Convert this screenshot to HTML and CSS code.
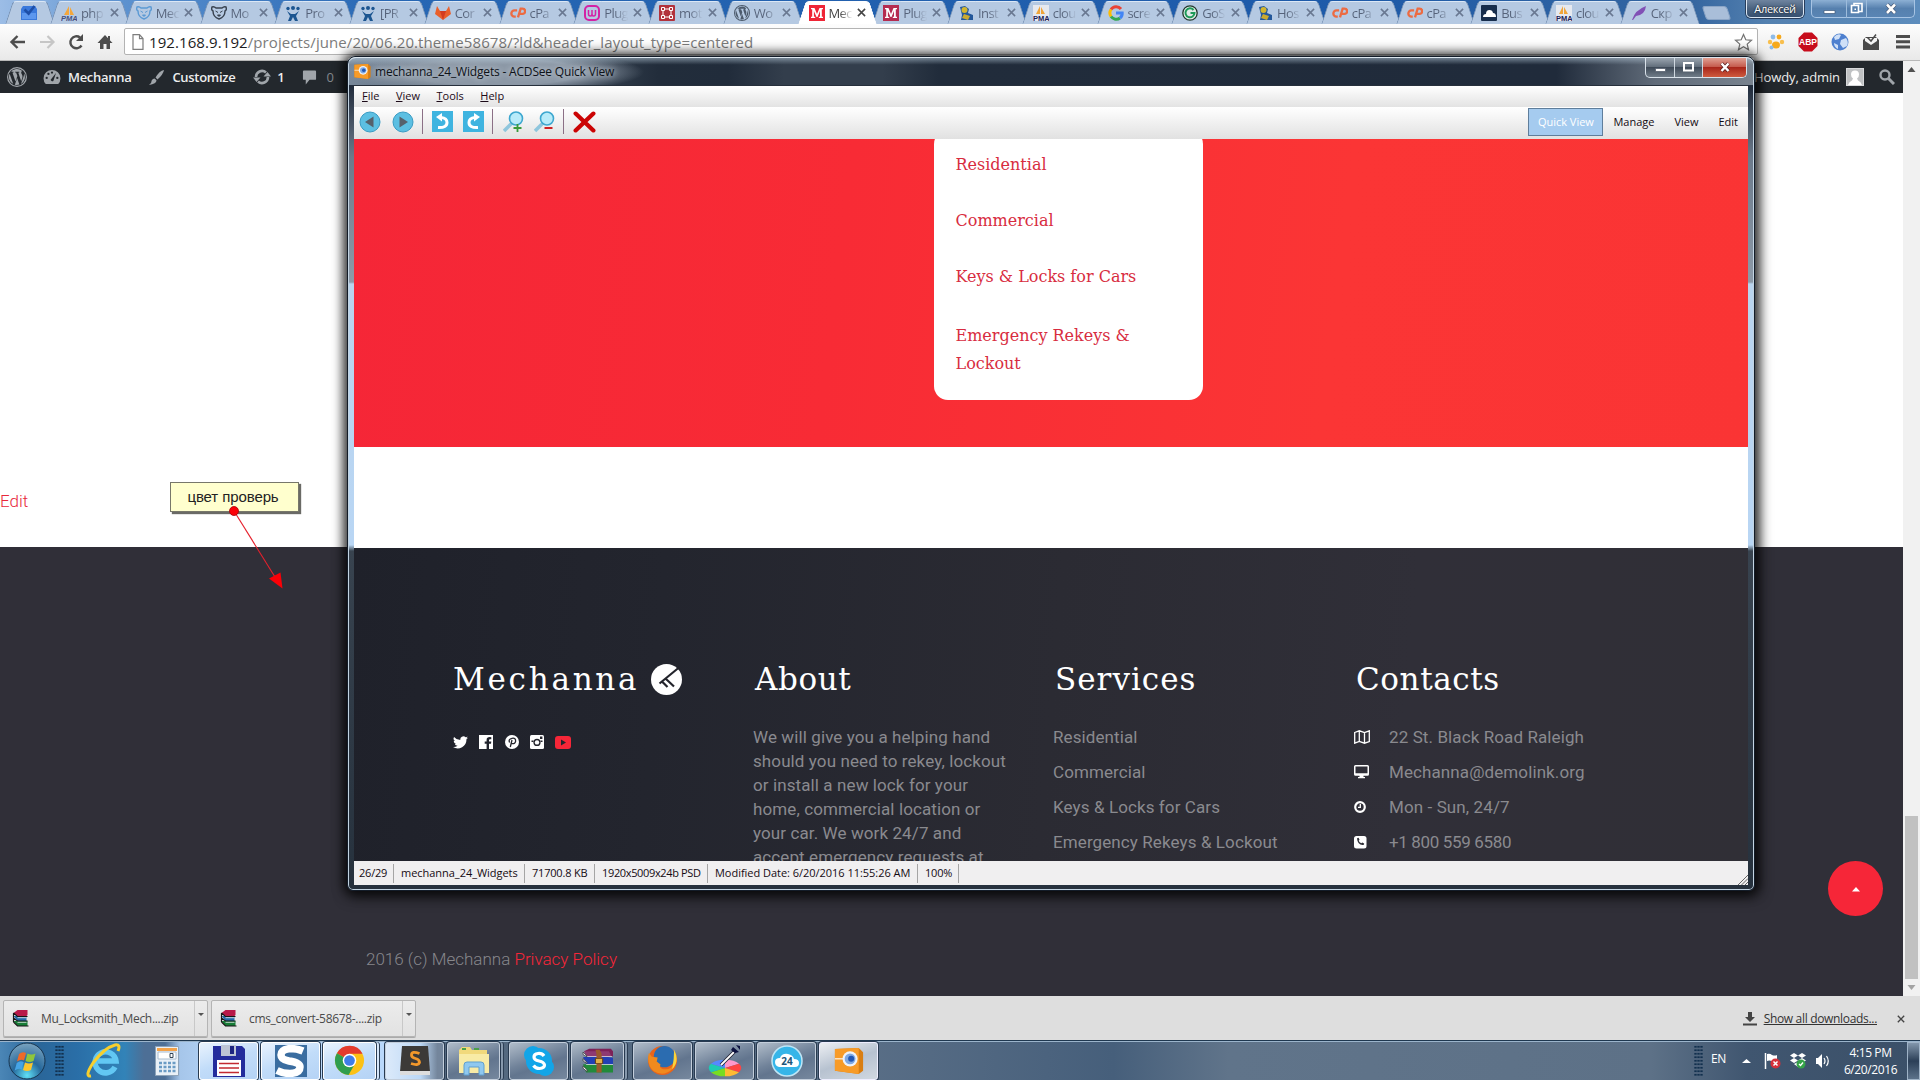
FILE: index.html
```html
<!DOCTYPE html>
<html lang="en">
<head>
<meta charset="utf-8">
<title>Mechanna</title>
<link rel="stylesheet" href="styles.css">
</head>
<body>
<svg class="defs" width="0" height="0" aria-hidden="true">
  <symbol id="i-pma" viewBox="0 0 16 16"><path d="M3 10L8 1v9zM9 10V2l4 8z" fill="#f4a63a"/><text x="0" y="16" font-size="7.500" font-weight="700" font-family="Liberation Sans" font-style="italic" fill="#46507e">PMA</text></symbol>
  <symbol id="i-pma2" viewBox="0 0 16 16"><path d="M0 0h16v16H0z" fill="#e6e9ef"/><path d="M3 9L7 1v8zM8 9V2l4 7z" fill="#f0a53a"/><text x="0" y="15.500" font-size="7.500" font-weight="700" font-family="Liberation Sans" fill="#1d2458">PMA</text></symbol>
  <symbol id="i-bear" viewBox="0 0 16 16"><path d="M1 2q2-1 4 1h6q2-2 4-1 1 3-1 4 0 6-6 8-6-2-6-8-2-1-1-4z" fill="none" stroke="currentColor" stroke-width="1.400"/><path d="M4.500 6l2.500 1.500M11.500 6L9 7.500M6.500 10h3L8 11.500z" stroke="currentColor" fill="currentColor"/></symbol>
  <symbol id="i-jira" viewBox="0 0 16 16"><g fill="#1c5590"><circle cx="8" cy="3" r="2"/><circle cx="3" cy="3.500" r="1.700"/><circle cx="13" cy="3.500" r="1.700"/><path d="M2 6l4 3h4l4-3-3 5 2 5h-3l-2-4-2 4H3l2-5z"/></g></symbol>
  <symbol id="i-lab" viewBox="0 0 16 16"><path d="M8 15L0 9l2-8 3 5h6l3-5 2 8z" fill="#e9602c"/><path d="M8 15L5 6h6z" fill="#d33c20"/></symbol>
  <symbol id="i-cp" viewBox="0 0 18 16"><g fill="none" stroke="#ec6b42" stroke-width="2.600"><path d="M8 5H5a3 3 0 0 0 0 7h1.500"/><path d="M9 13l3-10h2a2.800 2.800 0 0 1 0 6h-3"/></g></symbol>
  <symbol id="i-w" viewBox="0 0 16 16"><rect x="1" y="1" width="14" height="14" rx="4" fill="none" stroke="#d322a5" stroke-width="2"/><path d="M4.500 5v4q0 2 1.700 2T8 9V5v4q0 2 1.700 2t1.800-2V5" fill="none" stroke="#d322a5" stroke-width="1.500"/></symbol>
  <symbol id="i-mot" viewBox="0 0 16 16"><rect width="16" height="16" rx="1" fill="#b2323c"/><path d="M4 4h8v8H4z" fill="none" stroke="#fff"/><path d="M2.500 2.500h3v3h-3zM10.500 2.500h3v3h-3zM2.500 10.500h3v3h-3zM10.500 10.500h3v3h-3z" fill="#b2323c" stroke="#fff"/></symbol>
  <symbol id="i-wp" viewBox="0 0 20 20"><path fill="currentColor" fill-rule="evenodd" d="M10 0a10 10 0 1 0 0 20 10 10 0 0 0 0-20zm0 1.200a8.800 8.800 0 1 1 0 17.600 8.800 8.800 0 0 1 0-17.600z"/><path fill="currentColor" d="M2.600 6.800l3.700 10.300A8 8 0 0 1 2.600 6.800zM3.400 5.500A8 8 0 0 1 15.300 4c-1.300.4-1.400 1.800-.6 3 1 1.700.9 2.800.4 4.500l-.9 2.700-2.900-8.500 1-.2v-.7H8.100v.7l1 .1 1.300 3.500-1.900 5.300-3-8.700 1-.2v-.7H3.700zM10.100 10.900l2.300 6.700q-2.300.8-4.500.2zM17 6.300a8 8 0 0 1-3 10.600l2.400-6.800q.8-2 .6-3.800z"/></symbol>
  <symbol id="i-m" viewBox="0 0 16 16"><rect width="16" height="16" fill="currentColor"/><path d="M2 3h3.500L8 9l2.500-6H14v1.200h-1.200v7.600H14V13h-4.200v-1.200H11V6l-2.500 6h-1L4.900 6v5.800h1.300V13H2v-1.200h1.200V4.200H2z" fill="#fff"/></symbol>
  <symbol id="i-inst" viewBox="0 0 16 16"><path d="M2 2l5-1 4 3-1 4 5 2v5H3l1-5z" fill="#23579a"/><circle cx="6.500" cy="5" r="3" fill="#d2b52e"/><path d="M6 9l6 2-2 4-6-2z" fill="#caa92f"/></symbol>
  <symbol id="i-g" viewBox="0 0 16 16"><g fill="none" stroke-width="3"><path d="M13 4A6.300 6.300 0 0 0 3 4.500" stroke="#e94335"/><path d="M3 4.500a6.300 6.300 0 0 0 0 7" stroke="#fbbc05"/><path d="M3 11.500a6.300 6.300 0 0 0 9 1.500" stroke="#34a853"/><path d="M12 13q2.400-2 2.200-5H8" stroke="#4285f4"/></g></symbol>
  <symbol id="i-gos" viewBox="0 0 16 16"><circle cx="8" cy="8" r="7.200" fill="#dfe9e6" stroke="#21382c" stroke-width="1.300"/><path d="M11.500 5A4.500 4.500 0 1 0 12.500 8H8.500" fill="none" stroke="#1e9a58" stroke-width="2"/></symbol>
  <symbol id="i-bus" viewBox="0 0 16 16"><rect width="16" height="16" rx="1" fill="#172d4c"/><path d="M2 12q0-3 3-3 0-4 3.500-4 3 0 3.500 3 3 0 3 4z" fill="#fff"/></symbol>
  <symbol id="i-pen" viewBox="0 0 16 16"><path d="M1 15Q4 5 15 1q-1 9-10 10l-3 4z" fill="#8150b5"/></symbol>
  <symbol id="i-x" viewBox="0 0 10 10"><path d="M1 1l8 8M9 1L1 9" stroke="currentColor" stroke-width="1.700"/></symbol>
  <symbol id="i-zip" viewBox="0 0 16 17"><path d="M1 3l4-3h10v5l-1 1H5z" fill="#b81949"/><path d="M1 6h13v5H5z" fill="#2569a8"/><path d="M1 11h14v5H5z" fill="#177d37"/><path d="M1 3l4 3.500h10M1 8l4 3h10M1 12l4 4h11M1 3v9" fill="none" stroke="#161616" stroke-width="1.200"/><path d="M5 7.700h9M5 12.300h9" stroke="#eee" stroke-width=".8"/></symbol>
  <symbol id="i-acd" viewBox="0 0 26 24"><path d="M0 1l22-1 4 4v17l-4 3-22-3z" fill="#d97e12"/><path d="M0 1l22-1v24L0 21z" fill="#f79b28"/><path d="M0 10h8" stroke="#fff" stroke-width="1"/><circle cx="14" cy="10" r="7" fill="#eef3fb"/><circle cx="14" cy="10" r="5" fill="#7fa9e4"/><circle cx="15" cy="10" r="2.800" fill="#2257b4"/></symbol>
</svg>

<main class="screen">
  <header class="tabstrip">
    <div class="tab pin"><svg class="fav"><path d="M0 4l2-3h12l2 3v11H0z" fill="#3a79dc"/><path d="M1 8h5l2 2.500L10 8h5v6H1z" fill="#5c97ee"/><path d="M3.500 4.500l4 4 6-7.500" fill="none" stroke="#1d4fa8" stroke-width="2.600"/></svg></div>
    <div class="tab"><svg class="fav"><use href="#i-pma"/></svg><span class="lbl">php</span><svg class="x"><use href="#i-x"/></svg></div>
    <div class="tab"><svg class="fav sky"><use href="#i-bear"/></svg><span class="lbl">Mec</span><svg class="x"><use href="#i-x"/></svg></div>
    <div class="tab"><svg class="fav ink"><use href="#i-bear"/></svg><span class="lbl">Mo</span><svg class="x"><use href="#i-x"/></svg></div>
    <div class="tab"><svg class="fav"><use href="#i-jira"/></svg><span class="lbl">Pro</span><svg class="x"><use href="#i-x"/></svg></div>
    <div class="tab"><svg class="fav"><use href="#i-jira"/></svg><span class="lbl">[PR</span><svg class="x"><use href="#i-x"/></svg></div>
    <div class="tab"><svg class="fav"><use href="#i-lab"/></svg><span class="lbl">Cor</span><svg class="x"><use href="#i-x"/></svg></div>
    <div class="tab"><svg class="fav"><use href="#i-cp"/></svg><span class="lbl">cPa</span><svg class="x"><use href="#i-x"/></svg></div>
    <div class="tab"><svg class="fav"><use href="#i-w"/></svg><span class="lbl">Plug</span><svg class="x"><use href="#i-x"/></svg></div>
    <div class="tab"><svg class="fav"><use href="#i-mot"/></svg><span class="lbl">mot</span><svg class="x"><use href="#i-x"/></svg></div>
    <div class="tab"><svg class="fav slate"><use href="#i-wp"/></svg><span class="lbl">Wo</span><svg class="x"><use href="#i-x"/></svg></div>
    <div class="tab active"><svg class="fav red"><use href="#i-m"/></svg><span class="lbl">Mec</span><svg class="x"><use href="#i-x"/></svg></div>
    <div class="tab"><svg class="fav plum"><use href="#i-m"/></svg><span class="lbl">Plug</span><svg class="x"><use href="#i-x"/></svg></div>
    <div class="tab"><svg class="fav"><use href="#i-inst"/></svg><span class="lbl">Inst</span><svg class="x"><use href="#i-x"/></svg></div>
    <div class="tab"><svg class="fav"><use href="#i-pma2"/></svg><span class="lbl">clou</span><svg class="x"><use href="#i-x"/></svg></div>
    <div class="tab"><svg class="fav"><use href="#i-g"/></svg><span class="lbl">scre</span><svg class="x"><use href="#i-x"/></svg></div>
    <div class="tab"><svg class="fav"><use href="#i-gos"/></svg><span class="lbl">GoS</span><svg class="x"><use href="#i-x"/></svg></div>
    <div class="tab"><svg class="fav"><use href="#i-inst"/></svg><span class="lbl">Hos</span><svg class="x"><use href="#i-x"/></svg></div>
    <div class="tab"><svg class="fav"><use href="#i-cp"/></svg><span class="lbl">cPa</span><svg class="x"><use href="#i-x"/></svg></div>
    <div class="tab"><svg class="fav"><use href="#i-cp"/></svg><span class="lbl">cPa</span><svg class="x"><use href="#i-x"/></svg></div>
    <div class="tab"><svg class="fav"><use href="#i-bus"/></svg><span class="lbl">Bus</span><svg class="x"><use href="#i-x"/></svg></div>
    <div class="tab"><svg class="fav"><use href="#i-pma2"/></svg><span class="lbl">clou</span><svg class="x"><use href="#i-x"/></svg></div>
    <div class="tab"><svg class="fav"><use href="#i-pen"/></svg><span class="lbl">Скр</span><svg class="x"><use href="#i-x"/></svg></div>
    <div class="newtab"></div>
    <div class="user">Алексей</div>
    <div class="caption">
      <svg width="34" height="18"><path d="M12 10.500h11v3H12z" fill="#fff" stroke="#3d5878" stroke-width=".7"/></svg>
      <svg width="20" height="18"><path d="M7 3.500h8v8H7z" fill="none" stroke="#fff" stroke-width="1.600"/><path d="M4.500 5.500h7v7h-7z" fill="#5680ae" stroke="#fff" stroke-width="1.600"/><path d="M7.500 8.500h1.500v1.500H7.500z" fill="#fff"/></svg>
      <svg width="48" height="18"><path d="M20 4.500l8 8.500M28 4.500L20 13" stroke="#3a4a66" stroke-width="4"/><path d="M20 4.500l8 8.500M28 4.500L20 13" stroke="#fff" stroke-width="2.600"/></svg>
    </div>
  </header>

  <nav class="toolbar">
    <svg class="nav" viewBox="0 0 18 18"><path d="M16 9H3M8.500 3L2.500 9l6 6" fill="none" stroke="#4d4d4d" stroke-width="2.400"/></svg>
    <svg class="nav" viewBox="0 0 18 18"><path d="M2 9h13M9.500 3l6 6-6 6" fill="none" stroke="#c6c6c6" stroke-width="2.200"/></svg>
    <svg class="nav" viewBox="0 0 18 18"><path d="M14.500 12.500A6 6 0 1 1 13 4.500" fill="none" stroke="#4d4d4d" stroke-width="2.400"/><path d="M16 1v7H9z" fill="#4d4d4d"/></svg>
    <svg class="nav" viewBox="0 0 18 18"><path d="M9 2l7.500 8h-2.500v6h-3.500v-5h-3v5H4v-6H1.500z" fill="#4d4d4d"/><path d="M12 3h2v4h-2z" fill="#4d4d4d"/></svg>
    <div class="omni">
      <svg width="12" height="16" viewBox="0 0 12 16"><path d="M1 .7h6.500L11 4.500v10.800H1z M7.500.7v4H11" fill="#fff" stroke="#7d7d7d" stroke-width="1.200"/></svg>
      <span class="url"><b>192.168.9.192</b>/projects/june/20/06.20.theme58678/?ld&amp;header_layout_type=centered</span>
      <svg class="star" width="19" height="18" viewBox="0 0 19 18"><path d="M9.500 1.500l2.300 5.300 5.700.5-4.300 3.800 1.300 5.600-5-3-5 3 1.300-5.600L1.500 7.300l5.700-.5z" fill="#fff" stroke="#737373" stroke-width="1.200"/></svg>
    </div>
    <div class="ext">
      <svg width="18" height="18" viewBox="0 0 18 18"><ellipse cx="9" cy="12" rx="4" ry="3.500" fill="#f6a91c"/><g fill="#f8bf4d"><circle cx="3" cy="9" r="2.200"/><circle cx="15" cy="9" r="2.200"/></g><circle cx="6" cy="4" r="2.400" fill="#8dbbe8"/><circle cx="12" cy="4" r="2.400" fill="#f6a91c"/><circle cx="4.500" cy="14.500" r="2" fill="#8dbbe8"/></svg>
      <svg width="20" height="20" viewBox="0 0 20 20"><path d="M6 .5h8L19.500 6v8L14 19.500H6L.5 14V6z" fill="#c70d1c"/><text x="10" y="13.300" text-anchor="middle" font-size="8.500" font-weight="700" font-family="Liberation Sans" fill="#fff">ABP</text></svg>
      <svg width="18" height="18" viewBox="0 0 18 18"><circle cx="9" cy="9" r="8.500" fill="#4e80cf"/><path d="M3 4q4-4 7-2l-2 4-4 1zM10 7l5-2q3 4 1 8l-4 2-3-4zM3 10l4 2v4q-4-2-4-6z" fill="#cfe0f7"/></svg>
      <svg width="18" height="18" viewBox="0 0 18 18"><path d="M1 7l3-3h10l3 3v10H1z" fill="#4a4a4a"/><path d="M3 8V5h12v3l-6 4z" fill="#f5f5f5"/><path d="M5.500 4.500L9 8l5-6.500" fill="none" stroke="#4a4a4a" stroke-width="1.500"/></svg>
      <svg width="14" height="14" viewBox="0 0 14 14"><path d="M0 0h14v3H0zM0 5.300h14v3H0zM0 10.600h14v3H0z" fill="#4d4d4d"/></svg>
    </div>
  </nav>

  <section class="viewport">
    <div class="page">
      <div class="wpbar">
        <svg class="wplogo" viewBox="0 0 20 20"><use href="#i-wp"/></svg>
        <svg class="dash" viewBox="0 0 20 18"><path d="M3 17a9.500 9.500 0 1 1 14 0z" fill="#a0a5aa"/><g fill="#23282d"><circle cx="4" cy="10" r="1.300"/><circle cx="6" cy="5.500" r="1.300"/><circle cx="10" cy="4" r="1.300"/><circle cx="16" cy="10" r="1.300"/><path d="M14.500 4.500l-3 9a2 2 0 0 1-3-1.500z"/></g></svg>
        <span class="wt">Mechanna</span>
        <svg class="brush" viewBox="0 0 18 18"><path d="M17 1q-5 1-9 8l2 2q6-5 7-10zM7 10l2 2q0 4-8 5 3-2 3-5 1-2 3-2z" fill="#a0a5aa"/></svg>
        <span class="wt">Customize</span>
        <svg class="upd" viewBox="0 0 18 18"><path d="M3 9a6 6 0 0 1 10-4.500M15 9a6 6 0 0 1-10 4.500" fill="none" stroke="#a0a5aa" stroke-width="2.600"/><path d="M10.500 8.500h7.500L14.500 4zM7.500 9.500H0L3.500 14z" fill="#a0a5aa"/></svg>
        <span class="wt">1</span>
        <svg class="bub" viewBox="0 0 16 16"><path d="M2 1h12q1 0 1 1v8q0 1-1 1H8l-4 5v-5H2q-1 0-1-1V2q0-1 1-1z" fill="#a0a5aa"/></svg>
        <span class="wt dim">0</span>
        <span class="wt howdy">Howdy, admin</span>
        <svg class="avatar" viewBox="0 0 18 18"><path d="M0 0h18v18H0z" fill="#d7d9db"/><path d="M1 1h16v16H1z" fill="#c0c2c4"/><path d="M9 2.500q4 0 4 4 0 3-2 4l1 2q3 1 4 4.500H2q1-3.500 4-4.500l1-2q-2-1-2-4 0-4 4-4z" fill="#fff"/></svg>
        <svg class="srch" viewBox="0 0 16 16"><circle cx="6" cy="6" r="4.500" fill="none" stroke="#a0a5aa" stroke-width="2.400"/><path d="M9.500 9.500L15 15" stroke="#a0a5aa" stroke-width="3"/></svg>
      </div>
      <div class="blank"><a class="edit">Edit</a></div>
      <footer class="foot">
        <p class="copy">2016 (c) Mechanna <a>Privacy Policy</a></p>
        <div class="totop"><svg width="10" height="6"><path d="M1 5.500L5 1l4 4.500z" fill="#fff"/></svg></div>
      </footer>
    </div>
    <div class="scroll">
      <svg width="17" height="17"><path d="M4.500 11l4-5 4 5z" fill="#505050"/></svg>
      <div class="thumb"></div>
      <svg width="17" height="17"><path d="M4.500 6l4 5 4-5z" fill="#a3a3a3"/></svg>
    </div>
  </section>

  <section class="downloads">
    <div class="dl"><svg width="17" height="17"><use href="#i-zip"/></svg><span>Mu_Locksmith_Mech....zip</span><i></i></div>
    <div class="dl"><svg width="17" height="17"><use href="#i-zip"/></svg><span>cms_convert-58678-....zip</span><i></i></div>
    <div class="all"><svg width="14" height="14"><path d="M5 0h4v5h3L7 10 2 5h3zM0 11.500h14v2H0z" fill="#444"/></svg><a>Show all downloads...</a><svg width="8" height="8" viewBox="0 0 10 10" class="dx"><use href="#i-x"/></svg></div>
  </section>

  <section class="taskbar">
    <svg class="orb" width="40" height="38" viewBox="0 0 40 38"><defs><radialGradient id="orb" cx=".5" cy=".9" r=".9"><stop offset="0" stop-color="#5fe0f6"/><stop offset=".45" stop-color="#27699c"/><stop offset="1" stop-color="#7aa3bf"/></radialGradient></defs><circle cx="20" cy="19" r="18" fill="url(#orb)" stroke="#16344f"/><path d="M12 12q3.500-3 7-1l-2 7.500q-3-2-7 1z" fill="#ee6a28"/><path d="M20.500 11.500q4 2 8 0l-2 7.500q-4 2-8 0z" fill="#8fc63c"/><path d="M9.700 21q3.500-3 7-1l-2 7.500q-3-2-7 1z" fill="#46a4e6"/><path d="M18 20.500q4 2 8 0l-2 7.500q-4 2-8 0z" fill="#fcc62d"/></svg>
    <div class="grip"></div>
    <svg class="ie" width="36" height="36" viewBox="0 0 36 36"><path d="M29 24A10.500 10.500 0 1 1 30 18H12" fill="none" stroke="#62c7f3" stroke-width="5.500"/><path d="M5 33Q-2 34 7 20 18 5 29 2q6-1 3 6" fill="none" stroke="#f7cf2e" stroke-width="3"/></svg>
    <svg class="calc" width="24" height="30" viewBox="0 0 24 30"><path d="M.5.500h23v29H.5z" fill="#e9f0f7" stroke="#8ea3b8"/><path d="M2 2h20v3H2z" fill="#f2a24a"/><path d="M3 6h18v7H3z" fill="#fff" stroke="#a8bccf"/><path d="M15 7.500h3v4h-3z" fill="none" stroke="#345"/><path d="M4 17h17M4 21h17M4 25h17" stroke="#6b9bc4" stroke-width="2.600" stroke-dasharray="3 1.500"/></svg>
    <div class="tb lit"><svg width="32" height="32" viewBox="0 0 32 32"><path d="M0 1h29l3 3v28H0z" fill="#232c9c"/><path d="M8 0h15v11H8z" fill="#bcc4d4"/><path d="M17 1h4v8h-4z" fill="#1d2580"/><path d="M4 15h24v16H4z" fill="#fff"/><path d="M6 18.500h20M6 23h20M6 27.500h20" stroke="#c22a31" stroke-width="1.600"/></svg></div>
    <div class="tb lit"><svg width="32" height="32" viewBox="0 0 32 32"><path d="M0 0h32v32H0z" fill="#3a6da0"/><path d="M28 6Q22 3.500 15 3.500 6 4.500 6 10q0 4.500 8 6 11 1.500 11 6 0 6-10 6.500-7 0-13-3" fill="none" stroke="#fff" stroke-width="7.500"/></svg></div>
    <div class="tb lit stack"><svg width="31" height="31" viewBox="0 0 32 32"><circle cx="16" cy="16" r="15" fill="#fbc116"/><path d="M16 16L3 8.500A15 15 0 0 1 29.500 9H16z" fill="#e33b2e"/><path d="M3 8.500A15 15 0 0 0 15 31l5.500-9.500L16 16z" fill="#2f9e4f"/><circle cx="16" cy="16" r="7" fill="#fff"/><circle cx="16" cy="16" r="5.500" fill="#3f7de8"/></svg></div>
    <div class="tb half"><svg width="30" height="30" viewBox="0 0 30 30"><path d="M2 0h26l2 26H0z" fill="#3c3a38"/><path d="M0 25h30v4H0z" fill="#ddd"/><path d="M19.500 7.500q-8-3-8 1.500 0 2.500 4 3.500t4 4q-1 3.500-8.500 1" fill="none" stroke="#f3982b" stroke-width="2.800"/></svg></div>
    <div class="tb stack"><svg width="32" height="31" viewBox="0 0 32 31"><path d="M1 5l3-3h8l2 3h15v22H1z" fill="#f1d97c"/><path d="M1 9h30v19H1z" fill="#f8eba6"/><path d="M4 3h4v2H4zM16 3h5v2h-5z" fill="#4aa14a"/><path d="M6 30v-10q0-3 3-3h14q3 0 3 3v10h-5v-8H11v8z" fill="#8fc8ef" stroke="#5f9fd0"/></svg></div>
    <div class="tb"><svg width="32" height="32" viewBox="0 0 32 32"><circle cx="10" cy="10" r="9" fill="#12a5e8"/><circle cx="22" cy="22" r="9" fill="#12a5e8"/><circle cx="16" cy="16" r="13" fill="#12a5e8"/><path d="M21 11q-2-3-6-2.500-4 .5-4 3.500t5 4 5.500 4q0 3-5 3.500-4 0-6-3" fill="none" stroke="#fff" stroke-width="3.200"/></svg></div>
    <div class="tb stack"><svg width="33" height="26" viewBox="0 0 32 32" preserveAspectRatio="none"><path d="M3 4l5-3h21l2 3v6H6z" fill="#7d2158"/><path d="M3 4h24l3 7H6z" fill="#8e3a72"/><path d="M2 11h24l5 1v8H5z" fill="#2140b5"/><path d="M2 20h24l5 1v9H5z" fill="#218a3a"/><path d="M2 5l4 5v1L2 8zM2 13l4 5v1l-4-3zM2 22l4 5v2l-4-4z" fill="#fff" stroke="#333" stroke-width=".8"/><path d="M6 10.500h24M5 20.500h26" stroke="#dfe3ea"/><path d="M14 2h4l2 5v23h-5V8z" fill="#9a5a2c"/><path d="M14 13h7v6h-7z" fill="#e0b14a" stroke="#6b4313"/></svg></div>
    <div class="tb"><svg width="31" height="31" viewBox="0 0 32 32"><circle cx="16" cy="16" r="15" fill="#e8641b"/><circle cx="18" cy="12" r="11" fill="#2b6cb0"/><path d="M28 5q6 12-2 20-9 8-19 2-8-7-5-19l3 4 6 1-1 4 4 3q-2 4 3 5 8 1 11-6 2-7 0-14z" fill="#f08a1e"/><path d="M28 5q6 12-2 20 2-10 2-20z" fill="#fbd53b"/></svg></div>
    <div class="tb"><svg width="34" height="32" viewBox="0 0 34 32"><g transform="translate(17 23) scale(1 .52)"><path d="M0 0V-16A16 16 0 0 1 14-8z" fill="#f9c"/><path d="M0 0L14-8A16 16 0 0 1 14 8z" fill="#f44"/><path d="M0 0L14 8A16 16 0 0 1 0 16z" fill="#fb3"/><path d="M0 0V16A16 16 0 0 1-14 8z" fill="#7d2"/><path d="M0 0L-14 8A16 16 0 0 1-14-8z" fill="#1ec9b4"/><path d="M0 0L-14-8A16 16 0 0 1 0-16z" fill="#58f"/></g><path d="M13 20L27 6" stroke="#223" stroke-width="3.500"/><path d="M13 20L26 7" stroke="#fff" stroke-width="1.800"/><path d="M25 2l6 5-4 1-4-3zM28 0l4 1v4z" fill="#0c1240"/></svg></div>
    <div class="tb"><svg width="32" height="32" viewBox="0 0 32 32"><circle cx="16" cy="16" r="15" fill="#36b5e8" stroke="#bfe6f6" stroke-width="1.500"/><path d="M8 22q-4-1-4-5t5-4q2-5 8-4 5 1 6 5 5 0 5 4t-4 4z" fill="#fff"/><text x="16" y="20" text-anchor="middle" font-size="10" font-weight="700" font-family="Open Sans" fill="#1d5678">24</text></svg></div>
    <div class="tb on"><svg width="32" height="26"><use href="#i-acd"/></svg></div>
    <div class="tray">
      <div class="grip end"></div>
      <span class="lang">EN</span>
      <svg width="10" height="6" class="up"><path d="M0 5l4.500-4L9 5z" fill="#fff"/></svg>
      <svg width="17" height="16" viewBox="0 0 17 16"><path d="M1.500 0v16" stroke="#fff" stroke-width="1.500"/><path d="M3 1q3-1 5 1 3 1 5 0v6q-3 1-5 0-3-1-5 0z" fill="#fff"/><circle cx="11.500" cy="10.500" r="5" fill="#d5303a"/><path d="M9.500 8.500l4 4M13.500 8.500l-4 4" stroke="#fff" stroke-width="1.500"/></svg>
      <svg width="16" height="16" viewBox="0 0 16 16"><path d="M4 0l4 2.500L4 5 0 2.500zM12 0l4 2.500L12 5 8 2.500zM4 5l4 2.500L4 10 0 7.500zM12 5l4 2.500-4 2.500-4-2.500zM4 11l4-2 3 2-3 3z" fill="#fff"/><circle cx="11" cy="11" r="4.500" fill="#35a348"/><path d="M9 11l1.500 1.500L13 9.500" stroke="#fff" stroke-width="1.300" fill="none"/></svg>
      <svg width="15" height="16" viewBox="0 0 15 16"><path d="M1 5h2l4-4v14l-4-4H1z" fill="#fff"/><path d="M9 5q2 3 0 6M11.500 3q3.500 5 0 10" stroke="#fff" stroke-width="1.200" fill="none"/></svg>
      <div class="clock"><span>4:15 PM</span><span>6/20/2016</span></div>
      <div class="peek"></div>
    </div>
  </section>

  <div class="note">цвет проверь</div>
  <svg class="arrow" width="70" height="90" viewBox="225 505 70 90"><path d="M234 511L275 577" stroke="#e5202c" stroke-width="1.100"/><circle cx="234" cy="511" r="4.500" fill="#fb0007" stroke="#a80008" stroke-width=".8"/><path d="M282.500 588.500L269 578.500l11.500-6z" fill="#fb0007"/></svg>

  <section class="win">
    <div class="wtitle">
      <svg width="17" height="15"><use href="#i-acd"/></svg>
      <span class="wname">mechanna_24_Widgets - ACDSee Quick View</span>
      <div class="wbtns">
        <svg width="28" height="19"><path d="M9.500 10.500h10v3h-10z" fill="#fff" stroke="#4a5564" stroke-width=".7"/></svg>
        <svg width="28" height="19"><path d="M9 5h9v7.500H9z" fill="none" stroke="#fff" stroke-width="2"/></svg>
        <svg width="45" height="19" class="cl"><path d="M18.500 5.500l7 7.500M25.500 5.500L18.500 13" stroke="#5a2020" stroke-width="4"/><path d="M18.500 5.500l7 7.500M25.500 5.500L18.500 13" stroke="#fff" stroke-width="2.500"/></svg>
      </div>
    </div>
    <div class="wbody">
      <div class="menu"><span><u>F</u>ile</span><span><u>V</u>iew</span><span><u>T</u>ools</span><span><u>H</u>elp</span></div>
      <div class="tools">
        <svg width="22" height="22" viewBox="0 0 22 22"><circle cx="11" cy="11" r="10" fill="#5cbfe2" stroke="#3a9cc4"/><path d="M14.500 5.500v11L6 11z" fill="#56616c"/></svg>
        <svg width="22" height="22" viewBox="0 0 22 22"><circle cx="11" cy="11" r="10" fill="#5cbfe2" stroke="#3a9cc4"/><path d="M7.500 5.500v11L16 11z" fill="#56616c"/></svg>
        <i class="sep"></i>
        <svg width="21" height="21" viewBox="0 0 21 21"><path d="M0 0h21v21H0z" fill="#3fb4e0"/><path d="M6 16.500q9 .5 9-5Q15 7 9 6.500" fill="none" stroke="#fff" stroke-width="3"/><path d="M10 2v8.500L4 6z" fill="#fff"/></svg>
        <svg width="21" height="21" viewBox="0 0 21 21"><path d="M0 0h21v21H0z" fill="#3fb4e0"/><path d="M15 16.500q-9 .5-9-5Q6 7 12 6.500" fill="none" stroke="#fff" stroke-width="3"/><path d="M11 2v8.500L17 6z" fill="#fff"/></svg>
        <i class="sep"></i>
        <svg width="21" height="22" viewBox="0 0 21 22"><path d="M1 20l8-8" stroke="#8fc6dd" stroke-width="3.500"/><circle cx="13" cy="7.500" r="6.500" fill="#b8ebf9" stroke="#3da7cf" stroke-width="1.600"/><path d="M14.500 13v8M10.500 17h8" stroke="#3a9a3a" stroke-width="1.800"/></svg>
        <svg width="21" height="22" viewBox="0 0 21 22"><path d="M1 20l8-8" stroke="#8fc6dd" stroke-width="3.500"/><circle cx="13" cy="7.500" r="6.500" fill="#b8ebf9" stroke="#3da7cf" stroke-width="1.600"/><path d="M10.500 17h8" stroke="#c22" stroke-width="2"/></svg>
        <i class="sep"></i>
        <svg width="23" height="22" viewBox="0 0 22 22" preserveAspectRatio="none"><path d="M2.500 2.500l17 17M19.500 2.500l-17 17" stroke="#cb0404" stroke-width="4" stroke-linecap="round"/></svg>
        <span class="mode cur">Quick View</span><span class="mode">Manage</span><span class="mode">View</span><span class="mode last">Edit</span>
      </div>
      <div class="doc">
        <div class="hero">
          <ul class="card"><li>Residential</li><li>Commercial</li><li>Keys &amp; Locks for Cars</li><li class="two">Emergency Rekeys &amp;<br>Lockout</li></ul>
        </div>
        <div class="gap"></div>
        <div class="dark">
          <div class="col">
            <h2 class="brand">Mechanna<svg width="31" height="31" viewBox="0 0 31 31"><circle cx="15.500" cy="15.500" r="15.500" fill="#fff"/><path d="M28 3.500L8.500 19.500M14.500 14.500l8.500 8M11 17.500l5.500 5.500" stroke="#23242c" stroke-width="2.200" fill="none"/></svg></h2>
            <div class="social">
              <svg width="15" height="13" viewBox="0 0 24 20"><path d="M24 2.400a10 10 0 0 1-2.800.8A5 5 0 0 0 23.300.500a10 10 0 0 1-3.100 1.200A4.900 4.900 0 0 0 11.800 6.100 14 14 0 0 1 1.700 1a4.900 4.900 0 0 0 1.500 6.600 5 5 0 0 1-2.200-.6A4.900 4.900 0 0 0 4.900 11.800a5 5 0 0 1-2.200.1 4.900 4.900 0 0 0 4.600 3.400A10 10 0 0 1 0 17.300 14 14 0 0 0 21.500 4.900 10 10 0 0 0 24 2.400z" fill="#fff"/></svg>
              <svg width="14" height="14" viewBox="0 0 14 14"><path d="M0 0h14v14h-4V8.700h2l.3-2.200H10V5.200q0-1 1-1h1.300V2.200q-4.700-.7-4.700 2.700v1.600H5.700v2.200h1.900V14H0z" fill="#fff"/></svg>
              <svg width="14" height="14" viewBox="0 0 14 14"><circle cx="7" cy="7" r="7" fill="#fff"/><path d="M5.300 12l1.700-7M4.600 7.600Q3 4 7 3.300t3.600 3q-.6 3-4 2.200" fill="none" stroke="#24252d" stroke-width="1.300"/></svg>
              <svg width="14" height="14" viewBox="0 0 14 14"><rect width="14" height="14" rx="1.500" fill="#fff"/><circle cx="7" cy="7.400" r="3.600" fill="#24252d"/><circle cx="7" cy="7.400" r="2.200" fill="#fff"/><path d="M10 1.600h2.400V4H10zM1.500 5.500h2v1.400h-2zM10.500 5.500h2v1.400h-2z" fill="#24252d"/></svg>
              <svg width="16" height="13" viewBox="0 0 16 13"><rect width="16" height="13" rx="3" fill="#f62638"/><path d="M6 3.500l5 3-5 3z" fill="#24252d"/></svg>
            </div>
          </div>
          <div class="col"><h2>About</h2><p>We will give you a helping hand<br>should you need to rekey, lockout<br>or install a new lock for your<br>home, commercial location or<br>your car. We work 24/7 and<br>accept emergency requests at</p></div>
          <div class="col"><h2 class="wide">Services</h2><ul><li>Residential</li><li>Commercial</li><li>Keys &amp; Locks for Cars</li><li>Emergency Rekeys &amp; Lockout</li></ul></div>
          <div class="col"><h2>Contacts</h2><ul>
            <li><svg width="16" height="14" viewBox="0 0 16 14"><path d="M.7 2.500L5.300.800l5.200 1.700L15.300.800v10.700l-4.800 1.700-5.200-1.700L.7 13.200zM5.300.800v10.700M10.500 2.500v10.700" fill="none" stroke="#fff" stroke-width="1.300"/></svg>22 St. Black Road Raleigh</li>
            <li><svg width="16" height="14" viewBox="0 0 16 14"><path d="M1.500 0h12q1.500 0 1.500 1.500v7.800q0 1.500-1.500 1.500H9.500V12H11v1.300H4V12h1.500v-1.200h-4Q0 10.800 0 9.300V1.500Q0 0 1.500 0zM1.500 1.500v6.800h12V1.500z" fill="#fff" fill-rule="evenodd"/></svg>Mechanna@demolink.org</li>
            <li><svg width="16" height="14" viewBox="0 0 16 14"><circle cx="6" cy="7" r="4.800" fill="none" stroke="#fff" stroke-width="2.200"/><path d="M6.300 4v3.400H4" fill="none" stroke="#fff" stroke-width="1.300"/></svg>Mon - Sun, 24/7</li>
            <li><svg width="16" height="14" viewBox="0 0 16 14"><rect x="0" y="1" width="12.500" height="12.500" rx="2.500" fill="#fff"/><path d="M3 3.500q1-1 1.700-.5l.8 1.700-.8 1q.7 1.700 2.600 2.600l1-.9 1.800 1q.4.800-.7 1.500Q3.700 10.500 3 3.500z" fill="#2b2b33"/></svg><span class="tel">+1 800 559 6580</span></li></ul></div>
        </div>
      </div>
      <div class="status"><span class="s1">26/29</span><span class="s2">mechanna_24_Widgets</span><span class="s3">71700.8 KB</span><span class="s4">1920x5009x24b PSD</span><span class="s5">Modified Date: 6/20/2016 11:55:26 AM</span><span class="s6">100%</span>
        <svg width="10" height="10"><path d="M0 10L10 0M3.500 10L10 3.500M7 10l3-3" stroke="#555" stroke-width=".9"/></svg></div>
    </div>
  </section>
</main>
</body>
</html>
```
FILE: styles.css
```css
* { box-sizing: border-box; }
body { margin: 0; font-family: "Open Sans", "Noto Sans", sans-serif; background: #302f38; }
ul, p, h2 { margin: 0; padding: 0; list-style: none; font-weight: 400; }
b { font-weight: 400; }
svg { flex: none; display: block; }
.defs { position: absolute; }
.screen { position: relative; display: flex; flex-direction: column; width: 1920px; height: 1080px; overflow: hidden; }

/* browser tabs */
.tabstrip { height: 24px; flex: none; display: flex; padding-left: 7px; background: linear-gradient(90deg, #9cbde6 0, #5e93d0 6%, #2767b4 20%, #1d5aa9 70%, #34659f 88%, #5481b0 92%, #5d8dbd 100%); }
.tab { position: relative; z-index: 0; flex: none; width: 74.76px; height: 24px; padding-top: 1px; display: flex; align-items: center; color: #56637a; font-size: 13px; }
.tab::before, .tab::after { content: ""; position: absolute; z-index: -1; top: 1px; bottom: 0; background: #b5c9e2; border-top: 1px solid #dbe7f5; }
.tab::before { left: 2px; right: 40%; transform: skewX(-18deg); border-left: 1px solid #748fb2; border-radius: 4px 0 0 0; }
.tab::after { left: 40%; right: 1px; transform: skewX(18deg); border-right: 1px solid #748fb2; border-radius: 0 4px 0 0; }
.tab.pin { width: 45px; }
.tab.active { z-index: 2; color: #3d3d3d; }
.tab.active::before, .tab.active::after { background: #fff; border-color: #fff; }
.fav { width: 16px; height: 16px; margin-left: 9px; }
.pin .fav { margin-left: 14px; }
.lbl { width: 24px; margin-left: 4px; white-space: nowrap; line-height: 20px; letter-spacing: -.6px; color: transparent; background: linear-gradient(90deg, #56637a 45%, #b0c2da 95%); -webkit-background-clip: text; background-clip: text; }
.active .lbl { background-image: linear-gradient(90deg, #3d3d3d 45%, #f4f4f4 95%); }
.x { width: 9px; height: 9px; margin-left: 4.500px; color: #697891; }
.active .x { color: #444; }
.sky { color: #5b9ad4; }
.ink { color: #38424f; }
.slate { color: #4c5a6c; }
.red { color: #ef2536; }
.plum { color: #b52c50; }
.newtab { width: 25px; height: 14px; margin: 6px 0 0 7px; background: #a9bed9; border: 1px solid #8ba5c6; border-radius: 3px; transform: skewX(18deg); }
.user { width: 58px; height: 18px; margin-left: auto; border: 1px solid #dde8f4; border-top: 0; border-radius: 0 0 5px 5px; background: linear-gradient(#6f849f, #4b6380 50%, #365070); box-shadow: 0 0 0 1px #273d5b; color: #fff; font-size: 11px; line-height: 17px; text-align: center; text-shadow: 0 0 2px #000; letter-spacing: -.3px; }
.caption { display: flex; width: 104px; height: 18px; margin: 0 5px 0 7px; border: 1px solid #a7c4e4; border-top: 0; border-radius: 0 0 5px 5px; background: linear-gradient(#8db0d4, #5680ae 50%, #5985b4); }
.caption svg + svg { border-left: 1px solid #9dbcdc; }

/* address row */
.toolbar { height: 37px; flex: none; display: flex; align-items: center; padding: 0 10px 1px 9px; background: linear-gradient(#fdfdfd, #e9e9e9); border-bottom: 1px solid #b8b8b8; }
.nav { width: 18px; height: 18px; margin-right: 11px; }
.omni { width: 1634px; height: 27px; display: flex; align-items: center; padding: 0 4px 0 7px; background: #fff; border: 1px solid #b3b3b3; border-radius: 2px; margin-left: -1px; }
.url { margin-left: 5px; font-size: 15px; letter-spacing: .09px; color: #7c7c7c; white-space: nowrap; }
.url b { color: #1c1c1c; }
.star { margin-left: auto; }
.ext { display: flex; align-items: center; margin-left: 9px; gap: 13px; flex: 1; }
.ext svg:last-child { margin-left: auto; }

/* page */
.viewport { height: 935px; flex: none; display: flex; }
.page { width: 1903px; display: flex; flex-direction: column; background: #fff; }
.wpbar { height: 32px; flex: none; display: flex; align-items: center; padding-left: 7px; background: #23282d; color: #eee; font-size: 13px; font-weight: 600; letter-spacing: -.3px; }
.wplogo { width: 20px; height: 20px; color: #a0a5aa; margin-right: 16px; }
.dash { width: 18px; height: 16px; margin-right: 7px; }
.brush { width: 17px; height: 17px; margin: 0 7px 0 17px; }
.upd { width: 18px; height: 18px; margin: 0 6px 0 18px; }
.bub { width: 15px; height: 16px; margin: 0 9px 0 18px; }
.wt.dim { color: #82878c; font-weight: 400; }
.howdy { margin-left: auto; font-weight: 400; letter-spacing: -.1px; }
.avatar { width: 18px; height: 18px; margin: 0 15px 0 6px; }
.srch { width: 16px; height: 16px; margin-right: 8px; }
.blank { height: 454px; flex: none; padding-top: 397px; }
.edit { font: 300 17px/22px Roboto, sans-serif; color: #e8283b; }
.foot { flex: 1; background: #302f38; position: relative; }
.copy { padding: 401px 0 0 366px; font: 300 17px/22px Roboto, sans-serif; color: #87878c; }
.copy a { color: #f62638; }
.totop { position: absolute; right: 20px; top: 314px; width: 55px; height: 55px; border-radius: 50%; background: #f62638; display: flex; align-items: center; justify-content: center; }
.scroll { width: 17px; display: flex; flex-direction: column; background: #f1f1f1; }
.thumb { width: 13px; height: 163px; margin: auto 2px 0; background: #c1c1c1; }

/* downloads */
.downloads { height: 44px; flex: none; display: flex; padding: 4px 15px 0 3px; gap: 3px; background: #dedede; font-size: 12px; letter-spacing: -.32px; color: #4a4a4a; }
.dl { width: 205px; height: 37px; display: flex; align-items: center; padding-left: 8px; border: 1px solid #b4b4b4; border-radius: 2px; background: linear-gradient(#ececec, #e2e2e2); box-shadow: 0 1px 0 #aaa; }
.dl span { margin-left: 12px; white-space: nowrap; }
.dl i { margin-left: auto; align-self: stretch; width: 13px; border-left: 1px solid #c8c8c8; padding: 12px 0 0 3px; }
.dl i::after { content: ""; display: block; border: 3px solid transparent; border-top-color: #555; width: 0; }
.all { margin-left: auto; display: flex; align-items: center; height: 37px; }
.all a { margin: 0 20px 0 7px; text-decoration: underline; color: #333; white-space: nowrap; }
.dx { color: #444; }

/* taskbar */
.taskbar { height: 40px; flex: none; display: flex; align-items: center; padding-left: 7px; border-top: 1px solid #1f3850; box-shadow: inset 0 1px 0 #9bb4cb; background: linear-gradient(90deg, #4b86b6 0, #2a6699 2%, #2a6ea7 4%, #3283b8 6.500%, #4d6f96 7.500%, #4d6f96 8.600%, #a6c6ea 9.400%, #b9d8fb 12%, #b9d8fb 22%, #53687f 23%, #596e86 45%, #465f7b 58%, #60748a 64%, #5d7187 86%, #405670 91%, #3b5068 100%); }
.grip { width: 9px; height: 31px; margin: 0 22px 0 8px; background: radial-gradient(circle, #12304e 1px, transparent 1.300px) 0 0/3px 3.500px; }
.calc { margin: 0 20px 0 33px; }
.tb { width: 59px; height: 38px; margin-right: 3px; display: flex; align-items: center; justify-content: center; border: 1px solid #c3cedb; border-radius: 3px; box-shadow: 0 0 0 1px #283a50; background: linear-gradient(160deg, #b0bcc9, #71839a 45%, #62758e 60%, #76889e); }
.tb.lit { background: linear-gradient(160deg, #e9f3fe, #c1dcf9 50%, #b5d3f5); border-color: #fff; }
.tb.half { background: linear-gradient(90deg, #dceafa, #bcd8f6 60%, #74869c 90%); }
.tb.on { background: linear-gradient(160deg, #eceff3, #b7c2d0 50%, #d0d8e1); border-color: #eef; }
.tb.stack { width: 53px; margin-right: 9px; box-shadow: 0 0 0 1px #283a50, 3px 0 0 0 #8799ad, 4px 0 0 0 #2c3e54; }
.tb.lit.stack { box-shadow: 0 0 0 1px #283a50, 3px 0 0 0 #d6e7fa, 4px 0 0 0 #2c3e54; }
.tray { margin-left: auto; display: flex; align-items: center; color: #fff; height: 39px; }
.grip.end { margin: 0 8px 0 0; }
.lang { font-size: 12px; letter-spacing: -.3px; margin-bottom: 4px; }
.up { margin: 0 12px 0 16px; }
.tray svg + svg { margin-right: 9px; }
.clock { width: 55px; margin-left: 4px; display: flex; flex-direction: column; align-items: center; font-size: 12px; letter-spacing: -.4px; line-height: 17px; }
.peek { width: 13px; height: 38px; margin-left: 9px; border: 1px solid #9fb3c7; background: linear-gradient(#8296ab, #2b3f57 50%, #5c728a); }

/* annotation */
.note { position: absolute; left: 170px; top: 482px; width: 129px; height: 30px; padding-right: 3px; background: #ffffce; border: 1px solid #77776a; box-shadow: 2px 2px 1px #6a6a66; text-align: center; font: 15px/28px "Liberation Sans", sans-serif; letter-spacing: -.1px; color: #222; }
.arrow { position: absolute; left: 225px; top: 505px; }

/* viewer window */
.win { position: absolute; left: 347px; top: 56px; width: 1408px; height: 835px; padding: 0 6px 6px; border: 1px solid #131c28; border-radius: 8px 8px 6px 6px; box-shadow: inset 0 0 0 1px #c3d4e2, 0 0 12px 3px rgba(0,0,0,.75), 2px 4px 14px 2px rgba(0,0,0,.5); background: linear-gradient(#4d5a68 0, #222d3d 30px, #6c7a8b 100px, #8d9aa8 225px, #b9d4ee 227px, #b9d6f4 488px, #38434f 494px, #26313d 100%); }
.wtitle { height: 28px; margin: 0 -5px; padding: 0 6px 0 5px; display: flex; align-items: center; border-radius: 7px 7px 0 0; border-top: 1px solid #dce6ee; background: linear-gradient(rgba(190,210,225,.5), transparent 25%), radial-gradient(ellipse 150px 22px at 145px 14px, #8c98a6 60%, transparent), linear-gradient(90deg, #78889a, #222d3b 22%, #212c3b 27%, #333e4c 31%, #333e4c 38%, #212c3b 42%, #202b3b 86%, #606b79 93%, #78838f 100%); }
.wname { margin: 0 0 1px 4px; font-size: 12px; letter-spacing: -.18px; color: #0e1218; text-shadow: 0 0 6px #dfe6ee; white-space: nowrap; }
.wbtns { display: flex; align-self: flex-start; margin-left: auto; width: 102px; height: 20px; border: 1px solid #d9e2ea; border-top: 0; border-radius: 0 0 5px 5px; overflow: hidden; background: linear-gradient(#9aa5b0, #606c79 48%, #3f4b59 50%, #707c88); }
.wbtns svg + svg { border-left: 1px solid #cfd8e0; }
.wbtns .cl { background: linear-gradient(#e0a093, #c4584a 48%, #a8261a 50%, #cf5a3e); }
.wbody { height: 800px; display: flex; flex-direction: column; background: #efefef; border: 1px solid #27303c; border-width: 1px 0; }
.menu { height: 21px; flex: none; display: flex; padding: 0 8px; font-size: 11px; line-height: 20px; color: #1c0a18; background: linear-gradient(#fff, #e3e3e3); }
.menu span { margin-right: 16.500px; }
.tools { height: 32px; flex: none; display: flex; align-items: center; padding: 0 10px 3px 5px; font-size: 11px; background: linear-gradient(#fff, #e1e1e1); }
.tools svg { margin-right: 10.500px; }
.sep { width: 1px; height: 25px; background: #8b7086; margin: 0 9.300px 0 -2.500px; }
.mode { color: #120a12; white-space: nowrap; margin-right: 20px; }
.mode.cur { width: 75px; height: 28px; line-height: 26px; text-align: center; margin: 0 10px 0 auto; background: #a5cbef; border: 1px solid #5f7e9c; color: #fff; }
.mode.last { margin-right: 0; }
.doc { height: 722px; flex: none; overflow: hidden; background: #fff; }
.hero { height: 308px; background: linear-gradient(97deg, #f52637 0, #f82b35 35%, #fb3535 70%, #fa3434 100%); display: flex; justify-content: center; align-items: flex-start; padding-left: 34px; }
.card { width: 269px; height: 270px; margin-top: -9px; padding: 21px 22px 0; background: #fff; border-radius: 14px; font: 16px/28px "DejaVu Serif", serif; color: #d82c40; white-space: nowrap; }
.card li { height: 28px; margin-bottom: 28px; }
.card .two { margin-top: 31px; }
.gap { height: 101px; }
.dark { height: 313px; display: grid; grid-template-columns: 300px 300px 301px 1fr; padding: 108px 0 0 99px; background: linear-gradient(95deg, #1f212a 0, #23252e 22%, #2b2b33 50%, #302f38 75%, #302f36 100%); color: #8a8a8f; font: 300 17px/24px Roboto, sans-serif; letter-spacing: .1px; }
.dark h2 { font: 31px/44px "DejaVu Serif", serif; letter-spacing: .6px; color: #fff; display: flex; align-items: center; height: 44px; padding: 2px 0 0 2px; white-space: nowrap; }
.dark .brand { letter-spacing: 2.750px; padding-left: 0; }
.dark .wide { letter-spacing: 1px; }
.brand svg { margin-left: 12px; }
.social { display: flex; gap: 11.300px; align-items: center; margin-top: 35px; }
.dark p { margin-top: 25px; white-space: nowrap; }
.dark ul { margin-top: 25px; white-space: nowrap; }
.dark li { height: 35px; display: flex; }
.dark li svg { margin: 5px 19px 0 0; }
.tel { letter-spacing: -.35px; }
.status { height: 24px; flex: none; display: flex; align-items: center; font-size: 11px; color: #140a12; background: #f0eff0; white-space: nowrap; }
.status span { height: 19px; line-height: 18px; border-right: 1px solid #a5a5a5; padding-left: 7px; letter-spacing: -.2px; }
.status .s1 { width: 40px; padding-left: 5px; }
.status .s2 { width: 131px; letter-spacing: -.03px; }
.status .s3 { width: 70px; }
.status .s4 { width: 113px; letter-spacing: -.35px; }
.status .s5 { width: 210px; letter-spacing: -.03px; }
.status .s6 { width: 41px; }
.status svg { margin: 13px 0 0 auto; }
```
